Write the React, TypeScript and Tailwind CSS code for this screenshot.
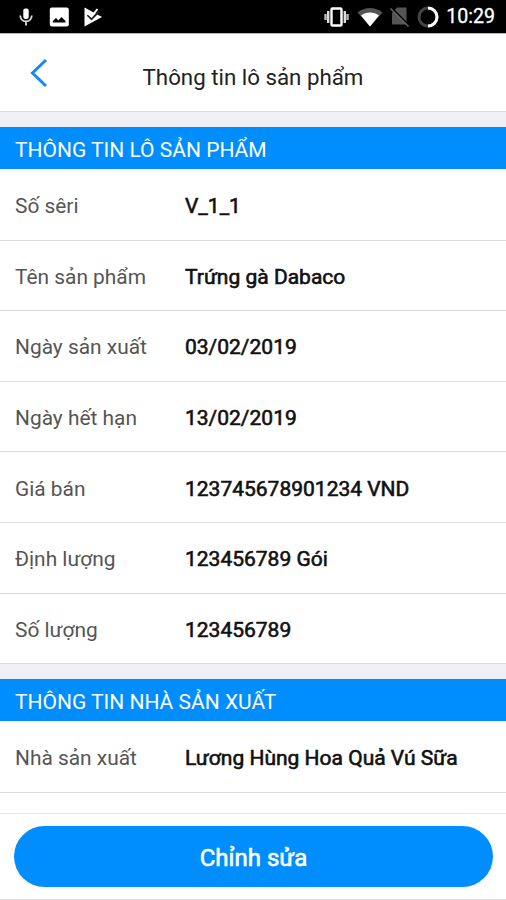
import React from 'react';

interface InfoRow {
  label: string;
  value: string;
}

const batchRows: InfoRow[] = [
  { label: 'Số sêri', value: 'V_1_1' },
  { label: 'Tên sản phẩm', value: 'Trứng gà Dabaco' },
  { label: 'Ngày sản xuất', value: '03/02/2019' },
  { label: 'Ngày hết hạn', value: '13/02/2019' },
  { label: 'Giá bán', value: '123745678901234 VND' },
  { label: 'Định lượng', value: '123456789 Gói' },
  { label: 'Số lượng', value: '123456789' },
];

const producerRows: InfoRow[] = [
  { label: 'Nhà sản xuất', value: 'Lương Hùng Hoa Quả Vú Sữa' },
];

const StatusBar: React.FC = () => (
  <div className="flex h-[34px] shrink-0 items-center justify-between border-b border-[#b5b5b5] bg-black pl-[19px] pr-[11px] pt-px text-white">
    <div className="flex items-center">
      <svg width="14" height="18" viewBox="0 0 14 18" fill="none">
        <rect x="4.3" y="0.5" width="5.4" height="10.5" rx="2" fill="#fff" />
        <path d="M1.2 7.5c.3 3.8 2.5 5.8 5.8 5.8s5.5-2 5.8-5.8M7 13.3V17.5" stroke="#ddd" strokeWidth="1.8" />
      </svg>
      <svg className="ml-[16px]" width="20" height="20" viewBox="0 0 20 20">
        <rect x="0.8" y="0.5" width="19" height="19" rx="2" fill="#fff" />
        <path d="M3.8 15.5V14L7 11l2.3 2.500L12.5 10l4 4v1.5z" fill="#000" />
      </svg>
      <svg className="ml-[14px]" width="20" height="20" viewBox="0 0 20 20">
        <path d="M1.5 0.5 19 10 1.5 19.5z" fill="#fff" />
        <path d="m4.5 8 4 4L16 4.5" stroke="#222" strokeWidth="2" fill="none" />
        <path d="m5 6.5 3.500 3L14.5 2" stroke="#fff" strokeWidth="2" fill="none" />
      </svg>
    </div>
    <div className="flex items-center">
      <svg width="28" height="20" viewBox="0 0 28 20" fill="none" stroke="#fff">
        <rect x="8.5" y="1.5" width="10" height="17" rx="1" strokeWidth="2.4" />
        <path d="M5.2 4v12M21.8 4v12" strokeWidth="2.4" stroke="#ddd" />
        <path d="M2.500 7v6M24.500 7v6" strokeWidth="2.4" stroke="#bbb" />
      </svg>
      <svg className="ml-[6px]" width="26" height="20" viewBox="0 0 26 20">
        <path d="M0.5 5.5C8-0.5 18-0.5 25.5 5.5L13 19.5z" fill="#555" />
        <path d="M4 8.5c5-4 13-4 18 0L13 19.5z" fill="#fff" />
      </svg>
      <svg className="ml-[7px]" width="20" height="20" viewBox="0 0 20 20">
        <path d="M7 0.5h9.500v17H2V6z" fill="#555" />
        <path d="M1.500 1 19 18.500" stroke="#000" strokeWidth="2" />
        <path d="M0.5 1.5 18.5 19.5" stroke="#666" strokeWidth="1.5" />
      </svg>
      <svg className="ml-[7px]" width="22" height="22" viewBox="0 0 22 22" fill="none" strokeWidth="3">
        <circle cx="11" cy="11" r="9" stroke="#444" />
        <path d="M11 2a9 9 0 1 1 0 18" stroke="#fff" />
      </svg>
      <span className="ml-[7px] text-[19.6px] leading-none [-webkit-text-stroke:0.3px]">10:29</span>
    </div>
  </div>
);

const SectionTitle: React.FC<{ title: string }> = ({ title }) => (
  <h2 className="flex h-[42px] shrink-0 items-center bg-[#008eff] px-[15px] pt-[5px] text-[21px] text-white">
    {title}
  </h2>
);

const InfoList: React.FC<{ rows: InfoRow[] }> = ({ rows }) => (
  <dl className="shrink-0">
    {rows.map((row) => (
      <div
        key={row.label}
        className="flex h-[70.6px] items-center border-b border-[#dcdcde] px-[15px] pt-[4px] text-[21px] first:h-[71.7px]"
      >
        <dt className="w-[170px] shrink-0 text-[20.9px] text-[#555]">{row.label}</dt>
        <dd className="whitespace-nowrap text-[#111] [-webkit-text-stroke:0.6px]">{row.value}</dd>
      </div>
    ))}
  </dl>
);

export default function App() {
  return (
    <div className="flex h-[900px] w-full flex-col overflow-hidden bg-white font-['Roboto',sans-serif]">
      <StatusBar />
      <header className="grid h-[78px] shrink-0 grid-cols-[80px_1fr_80px] items-center border-b border-[#dcdcde]">
        <button className="pl-[29px]" aria-label="Back">
          <svg width="20" height="30" viewBox="0 0 20 30" fill="none" stroke="#1688fa" strokeWidth="3">
            <path d="M17 2 3.5 15 17 28" />
          </svg>
        </button>
        <h1 className="pt-[10px] text-center text-[22.3px] text-[#222]">Thông tin lô sản phẩm</h1>
      </header>
      <main className="flex min-h-0 flex-1 flex-col overflow-hidden">
        <div className="h-[15px] shrink-0 bg-[#efeff4]" />
        <SectionTitle title="THÔNG TIN LÔ SẢN PHẨM" />
        <InfoList rows={batchRows} />
        <div className="h-[15px] shrink-0 bg-[#efeff4]" />
        <SectionTitle title="THÔNG TIN NHÀ SẢN XUẤT" />
        <InfoList rows={producerRows} />
      </main>
      <footer className="h-[87px] shrink-0 border-y border-[#e4e4e4] px-[14px] pt-[12px]">
        <button className="h-[61px] w-[479px] rounded-full bg-[#008eff] pt-[2px] text-[24px] text-white [-webkit-text-stroke:0.6px]">
          Chỉnh sửa
        </button>
      </footer>
    </div>
  );
}
